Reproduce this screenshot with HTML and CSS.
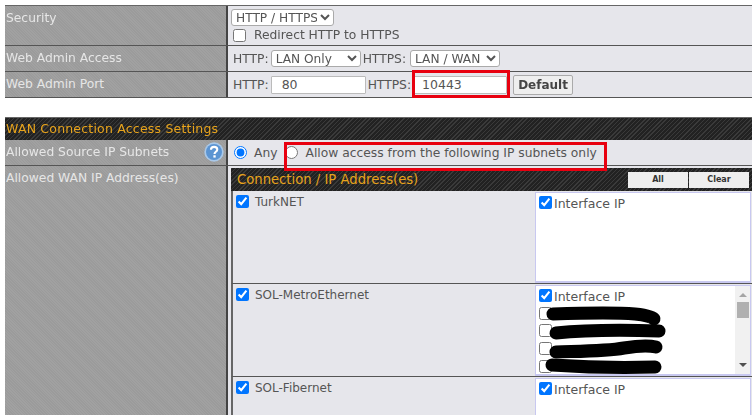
FILE: index.html
```html
<!DOCTYPE html>
<html lang="en">
<head>
<meta charset="utf-8">
<title>Web Admin Settings</title>
<link rel="stylesheet" href="styles.css">
</head>
<body>
<div class="page">
  <section class="table first">
    <div class="row r-security">
      <div class="label">Security</div>
      <div class="value stack">
        <div class="line"><select class="sel s-proto"><option>HTTP / HTTPS</option></select></div>
        <label class="line redirect"><input type="checkbox"><span>Redirect HTTP to HTTPS</span></label>
      </div>
    </div>
    <div class="row r-field">
      <div class="label">Web Admin Access</div>
      <div class="value inline">
        <span>HTTP:</span><select class="sel lan"><option>LAN Only</option></select>
        <span>HTTPS:</span><select class="sel wan"><option>LAN / WAN</option></select>
      </div>
    </div>
    <div class="row r-field">
      <div class="label">Web Admin Port</div>
      <div class="value inline">
        <span>HTTP:</span><input class="txt t80" type="text" value="80">
        <span>HTTPS:</span><input class="txt t443" type="text" value="10443">
        <button class="default" type="button">Default</button>
      </div>
    </div>
  </section>

  <section class="table second">
    <h2 class="bar">WAN Connection Access Settings</h2>
    <div class="row r-field r-source">
      <div class="label between">Allowed Source IP Subnets
        <svg class="help" width="20" height="20" viewBox="0 0 19 19" aria-hidden="true">
          <circle cx="9.5" cy="9.5" r="9.2" fill="#a9c8e8"/>
          <circle cx="9.5" cy="9.5" r="7.6" fill="#5b94d2"/>
          <path d="M6.6 7.4c0-1.8 1.3-2.8 3-2.8s3 1 3 2.5c0 2.2-2.6 2.2-2.6 4.2" fill="none" stroke="#fff" stroke-width="2"/>
          <rect x="8.9" y="12.6" width="2.2" height="2.2" fill="#fff"/>
        </svg>
      </div>
      <div class="value inline radios">
        <label class="radio"><input type="radio" name="src" checked><span>Any</span></label>
        <label class="radio second-radio"><input type="radio" name="src"><span>Allow access from the following IP subnets only</span></label>
      </div>
    </div>
    <div class="row r-wan">
      <div class="label">Allowed WAN IP Address(es)</div>
      <div class="value nest">
        <div class="conn-head">
          <span>Connection / IP Address(es)</span>
          <div class="head-btns"><button type="button">All</button><button type="button">Clear</button></div>
        </div>
        <div class="conn r1">
          <label class="conn-name"><input type="checkbox" checked><span>TurkNET</span></label>
          <div class="ips"><label class="ip"><input type="checkbox" checked><span>Interface IP</span></label></div>
        </div>
        <div class="conn r2">
          <label class="conn-name"><input type="checkbox" checked><span>SOL-MetroEthernet</span></label>
          <div class="ips scrolling">
            <div class="ip-list">
              <label class="ip"><input type="checkbox" checked><span>Interface IP</span></label>
              <label class="ip"><input type="checkbox"></label>
              <label class="ip"><input type="checkbox"></label>
              <label class="ip"><input type="checkbox"></label>
              <label class="ip"><input type="checkbox"></label>
            </div>
            <div class="scrollbar">
              <i class="arrow up"></i>
              <i class="thumb"></i>
              <i class="arrow down"></i>
            </div>
          </div>
        </div>
        <div class="conn r3">
          <label class="conn-name"><input type="checkbox" checked><span>SOL-Fibernet</span></label>
          <div class="ips"><label class="ip"><input type="checkbox" checked><span>Interface IP</span></label></div>
        </div>
      </div>
    </div>
  </section>

  <div class="mark m1"></div>
  <div class="mark m2"></div>
  <svg class="scribble" width="752" height="415" viewBox="0 0 752 415" aria-hidden="true">
    <g fill="none" stroke="#000" stroke-linecap="round" stroke-width="13">
      <path d="M553 314c28-1 60-2 82 0 10 1 18 3 19 5"/>
      <path d="M556 333c30-3 70-3 103-2"/>
      <path d="M556 352c34-1 52-1 68-4 12-2 24-3 32-1"/>
      <path d="M552 365c30 2 72 3 103 2"/>
    </g>
  </svg>
</div>
</body>
</html>
```
FILE: styles.css
```css
* { box-sizing: border-box; }
html, body { margin: 0; padding: 0; height: 100%; overflow: hidden; background: #fff; }
body { font-family: "DejaVu Sans", sans-serif; font-size: 12.3px; color: #555; }
.page { position: relative; width: 752px; height: 415px; padding: 5px 0 0 5px; overflow: hidden; filter: blur(0.45px); }
input, select, button { font-family: inherit; margin: 0; }
input[type="checkbox"], input[type="radio"] { width: 13px; height: 13px; flex: none; }

.table { border-top: 1px solid #666; }
.second { margin-top: 19px; border-top: 0; }

.row { display: grid; grid-template-columns: 223px 1fr; border-bottom: 1px solid #555; }
.r-security { height: 40px; }
.r-field { height: 26px; }
.r-source { height: 26px; }
.r-wan { border-bottom: 0; height: 250px; }

.label { background: #9d9d9d repeating-linear-gradient(45deg, #a1a1a1 0 1px, #9b9b9b 1px 2px); color: #e6e6e6; padding: 5px 0 0 1px; border-right: 2px solid #444; }
.between { display: flex; justify-content: space-between; align-items: flex-start; padding-right: 2px; }
.help { margin-top: -3px; }
.value { background: #e6e6eb; min-width: 0; }
.stack { display: flex; flex-direction: column; padding: 3px 0 0 3px; gap: 2px; }
.line { display: flex; align-items: center; gap: 9px; }
.redirect { padding-left: 2px; gap: 8px; }
.inline { display: flex; align-items: center; gap: 2px; padding-left: 5px; }

.sel { height: 17px; font-size: 12.2px; color: #555; background: #fff; border: 1px solid #aaa; border-radius: 3px; padding: 0; }
.s-proto { width: 103px; }
.lan { width: 90px; }
.wan { width: 90px; margin-left: 2px; }
.txt { height: 18px; font-size: 12.5px; color: #555; border: 1px solid #bbb; background: #fff; padding: 0 0 0 10px; border-radius: 1px; }
.t80 { width: 95px; }
.t443 { width: 94px; padding-left: 8px; margin-right: 4px; }
.default { height: 20px; width: 60px; padding: 0; font-size: 12px; font-weight: bold; color: #444; background: #eee; border: 1px solid #aaa; border-radius: 2px; }

.bar { margin: 0; height: 23px; padding: 3px 0 0 1px; font-size: 12.5px; font-weight: normal; color: #e8a41c; background: #2a2a2a repeating-linear-gradient(135deg, #3a3a3a 0 1px, #222 1px 3px); border-top: 1px solid #666; letter-spacing: 0.2px; }

.radios { gap: 0; padding-left: 6px; }
.radio { display: flex; align-items: center; gap: 7px; }
.second-radio { margin-left: 8px; gap: 7px; }

.nest { padding: 2px 0 0 3px; }
.conn-head { display: flex; justify-content: space-between; align-items: center; height: 23px; padding: 0 3px 0 6px; color: #e8a41c; font-size: 13.2px; background: #2a2a2a repeating-linear-gradient(135deg, #3a3a3a 0 1px, #222 1px 3px); }
.head-btns { display: flex; gap: 1px; }
.head-btns button { height: 16px; width: 60px; padding: 0; font-size: 8px; font-weight: bold; color: #333; background: #eee; border: 0; }
.conn { display: grid; grid-template-columns: 302px 1fr; border-bottom: 1px solid #555; border-left: 2px solid #666; }
.r1 { height: 93px; }
.r2 { height: 93px; }
.r3 { height: 60px; border-bottom: 0; }
.conn-name { display: flex; align-items: flex-start; gap: 6px; padding: 4px 0 0 3px; height: max-content; font-size: 12px; }
.ips { background: #fff; border: 1px solid #c8c8f0; border-bottom-width: 2px; margin: 1px 1px 0 0; padding: 1px 0 0 3px; font-size: 12.5px; }
.ip { display: flex; align-items: center; gap: 2px; height: 17.6px; }
.ip span { padding-top: 2px; }
.scrolling { display: flex; justify-content: space-between; overflow: hidden; }
.ip-list { height: 86px; overflow: hidden; }
.scrollbar { width: 15px; background: #f1f1f1; display: flex; flex-direction: column; align-items: center; margin-top: -1px; height: 89px; padding-top: 7px; }
.arrow { width: 0; height: 0; border-left: 4px solid transparent; border-right: 4px solid transparent; }
.up { border-bottom: 4px solid #a5a5a5; }
.down { border-top: 4px solid #505050; margin-top: 45px; }
.thumb { width: 12px; height: 16px; background: #b0b0b0; margin-top: 5px; }

.mark { position: absolute; border: 3px solid #e8000f; }
.m1 { left: 412px; top: 70px; width: 98px; height: 28px; }
.m2 { left: 284px; top: 142px; width: 323px; height: 29px; }
.scribble { position: absolute; left: 0; top: 0; }
```
